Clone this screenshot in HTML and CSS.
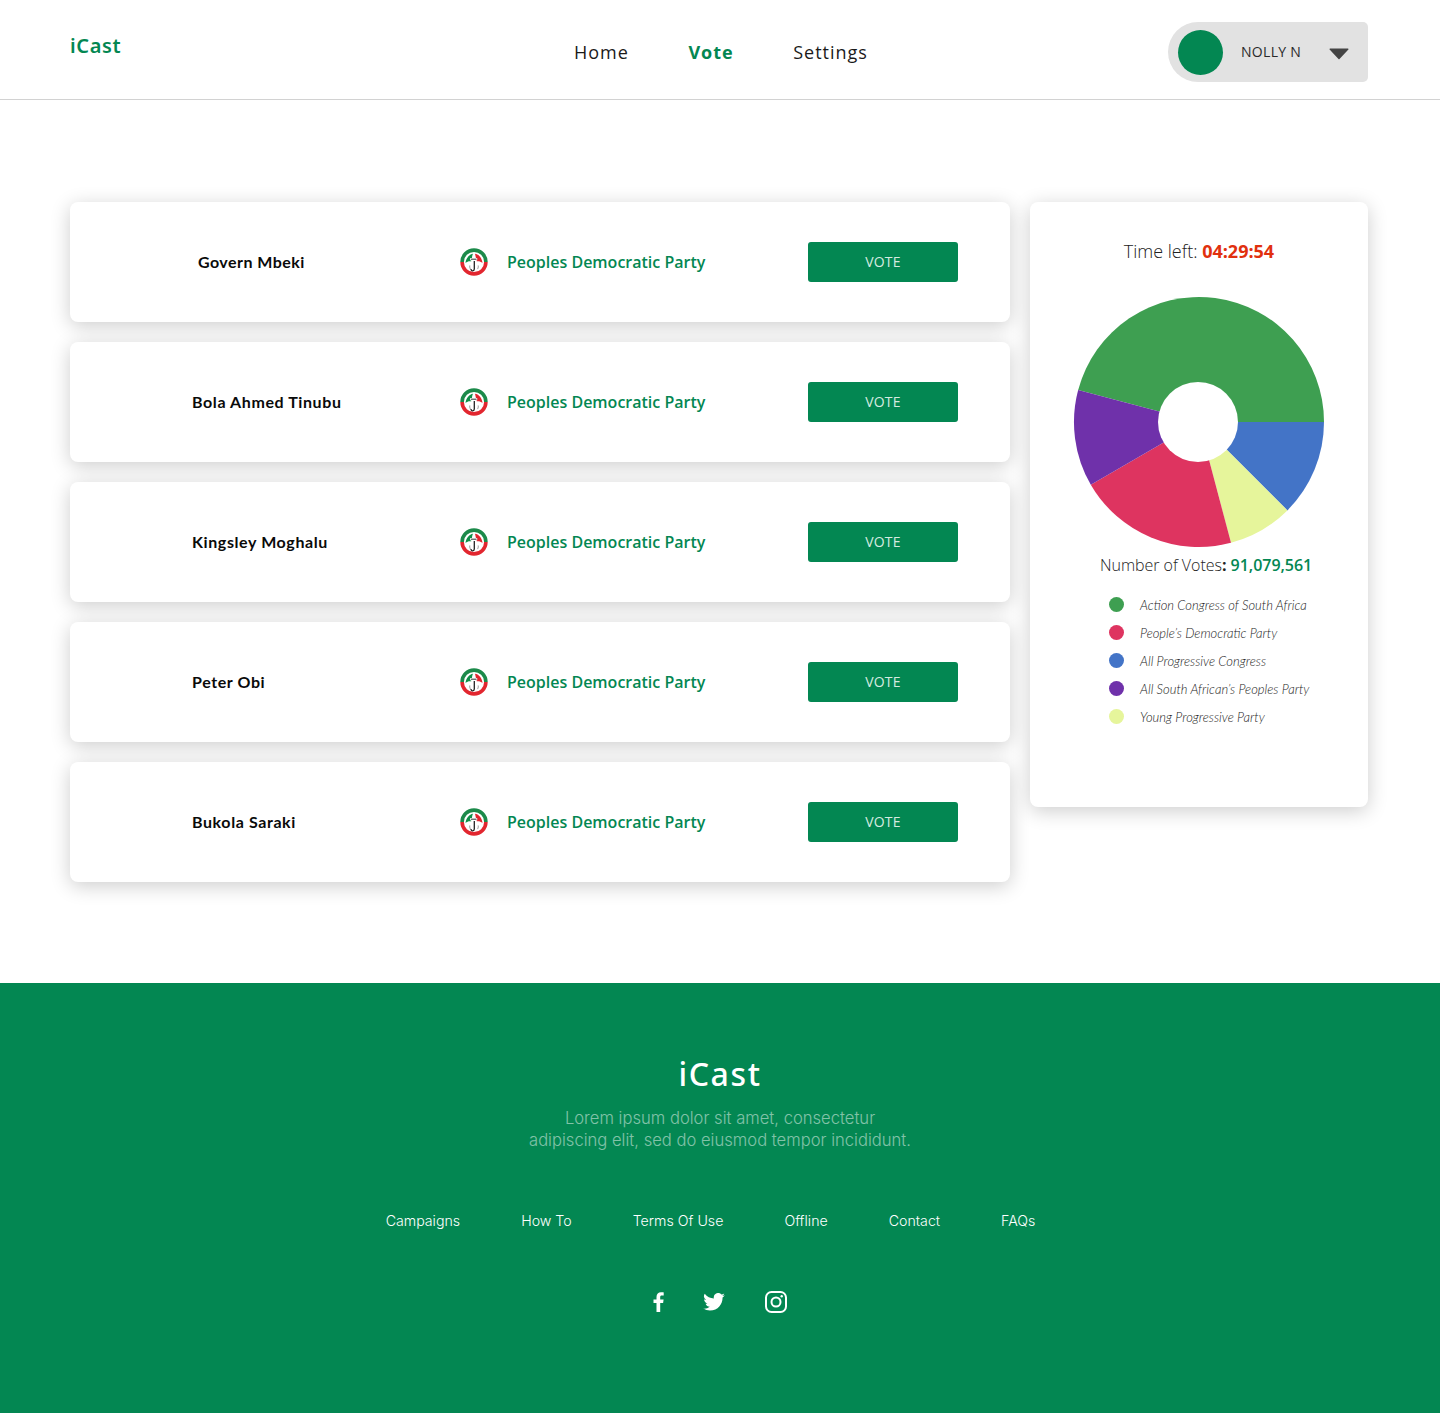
FILE: index.html
```html
<!DOCTYPE html>
<html lang="en">
<head>
<meta charset="utf-8">
<title>iCast</title>
<link rel="stylesheet" href="styles.css">
</head>
<body>
<svg class="defs" width="0" height="0" aria-hidden="true">
  <symbol id="pdp" viewBox="0 0 28 28">
    <circle cx="14" cy="14" r="14" fill="#fff"/>
    <path d="M.3 14a13.700 13.700 0 0 1 27.400 0h-3.600a10.100 10.100 0 0 0-20.200 0z" fill="#1c8a4a"/>
    <path d="M.3 14a13.700 13.700 0 0 0 27.400 0h-3.600a10.100 10.100 0 0 1-20.200 0z" fill="#e2262f"/>
    <path d="M5.500 15C6 10 9.500 6.200 13 5.800l-1.800 7.700C9.500 13 7.300 13.500 5.500 15z" fill="#0f9149"/>
    <path d="M13 5.800h2l1.700 7.500c-1.800-.6-3.800-.5-5.500.2z" fill="#fff"/>
    <path d="M15 5.800c3.500.3 7 4 7.500 9.200-1.600-1.500-3.800-2-5.800-1.700z" fill="#e2262f"/>
    <path d="M14.300 13v8c0 2.400-3.300 2.400-3.300 0" fill="none" stroke="#222" stroke-width="1.300"/>
    <path d="M10.200 10h7v2.400h-7z" fill="#fff"/>
    <path d="M11 11.200h5.500" stroke="#444" stroke-width="1.100"/>
    <path d="M9.800 17.500c-.3 1.500.2 3 .8 3.600M18.200 17.500c.3 1.500-.2 3-.8 3.600" fill="none" stroke="#777" stroke-width=".8"/>
  </symbol>
</svg>
<header class="topbar">
  <div class="logo">iCast</div>
  <nav class="nav">
    <a class="nav-link">Home</a>
    <a class="nav-link nav-active">Vote</a>
    <a class="nav-link">Settings</a>
  </nav>
  <div class="user">
    <span class="avatar"></span>
    <span class="user-name">NOLLY N</span>
    <svg class="caret" width="20" height="13" viewBox="0 0 20 13"><path d="M1 1.500h18a.6.6 0 0 1 .4 1L10.500 12a.7.7 0 0 1-1 0L.6 2.500a.6.6 0 0 1 .4-1z" fill="#444"/></svg>
  </div>
</header>

<main class="main">
  <section class="cards">
    <article class="card">
      <div class="cand cand-first">Govern Mbeki</div>
      <svg class="party-logo"><use href="#pdp"/></svg>
      <div class="party">Peoples Democratic Party</div>
      <button class="vote">VOTE</button>
    </article>
    <article class="card">
      <div class="cand">Bola Ahmed Tinubu</div>
      <svg class="party-logo"><use href="#pdp"/></svg>
      <div class="party">Peoples Democratic Party</div>
      <button class="vote">VOTE</button>
    </article>
    <article class="card">
      <div class="cand">Kingsley Moghalu</div>
      <svg class="party-logo"><use href="#pdp"/></svg>
      <div class="party">Peoples Democratic Party</div>
      <button class="vote">VOTE</button>
    </article>
    <article class="card">
      <div class="cand">Peter Obi</div>
      <svg class="party-logo"><use href="#pdp"/></svg>
      <div class="party">Peoples Democratic Party</div>
      <button class="vote">VOTE</button>
    </article>
    <article class="card">
      <div class="cand">Bukola Saraki</div>
      <svg class="party-logo"><use href="#pdp"/></svg>
      <div class="party">Peoples Democratic Party</div>
      <button class="vote">VOTE</button>
    </article>
  </section>

  <aside class="panel">
    <p class="timer">Time left: <b class="time">04:29:54</b></p>
    <svg class="pie" width="252" height="252" viewBox="-1 -1 252 252">
      <path d="M250 125A125 125 0 0 0 4.150 93.040L125 125z" fill="#3e9f51"/>
      <path d="M250 125A125 125 0 0 1 213.400 213.400L125 125z" fill="#4374c7"/>
      <path d="M213.400 213.400A125 125 0 0 1 157 245.800L125 125z" fill="#e6f59b"/>
      <path d="M157 245.800A125 125 0 0 1 16.800 187.700L125 125z" fill="#de3460"/>
      <path d="M16.800 187.700A125 125 0 0 1 4.150 93.040L125 125z" fill="#6f31aa"/>
      <circle cx="124" cy="125" r="40" fill="#fff"/>
    </svg>
    <p class="count">Number of Votes<b class="colon">:</b> <b class="num">91,079,561</b></p>
    <ul class="legend">
      <li class="legend-item"><span class="dot dot-green"></span>Action Congress of South Africa</li>
      <li class="legend-item"><span class="dot dot-red"></span>People’s Democratic Party</li>
      <li class="legend-item"><span class="dot dot-blue"></span>All Progressive Congress</li>
      <li class="legend-item"><span class="dot dot-purple"></span>All South African’s Peoples Party</li>
      <li class="legend-item"><span class="dot dot-yellow"></span>Young Progressive Party</li>
    </ul>
  </aside>
</main>

<footer class="footer">
  <div class="foot-logo">iCast</div>
  <p class="foot-text">Lorem ipsum dolor sit amet, consectetur<br>adipiscing elit, sed do eiusmod tempor incididunt.</p>
  <nav class="foot-links">
    <a>Campaigns</a><a>How To</a><a>Terms Of Use</a><a>Offline</a><a>Contact</a><a>FAQs</a>
  </nav>
  <div class="social">
    <svg class="fb" width="12" height="20" viewBox="0 0 12 20"><path d="M3.500 20v-9H.5V7.500h3V5c0-3 1.800-4.700 4.500-4.700 1.300 0 2.400.1 2.700.1v3.100H8.900c-1.500 0-1.700.7-1.700 1.700v2.300h3.400l-.5 3.500H7.200v9z" fill="#fff"/></svg>
    <svg width="22" height="18" viewBox="0 0 24 20"><path d="M24 2.400c-.9.4-1.800.7-2.800.8 1-.6 1.800-1.600 2.200-2.700-1 .6-2 1-3.100 1.200A4.900 4.900 0 0 0 11.900 6.200 14 14 0 0 1 1.700.9a4.900 4.900 0 0 0 1.500 6.600c-.8 0-1.600-.2-2.200-.6v.1c0 2.400 1.700 4.400 3.900 4.800-.7.200-1.500.2-2.200.1.600 2 2.400 3.400 4.600 3.400A9.900 9.900 0 0 1 0 17.300 14 14 0 0 0 7.500 19.500c9.100 0 14-7.500 14-14v-.6c1-.7 1.800-1.600 2.500-2.500z" fill="#fff"/></svg>
    <svg width="22" height="22" viewBox="0 0 22 22"><rect x="1" y="1" width="20" height="20" rx="5.500" fill="none" stroke="#fff" stroke-width="2"/><circle cx="11" cy="11" r="4.500" fill="none" stroke="#fff" stroke-width="2"/><circle cx="16.700" cy="5.300" r="1.200" fill="#fff"/></svg>
  </div>
</footer>
</body>
</html>
```
FILE: styles.css
```css
* { box-sizing: border-box; }
html, body { margin: 0; padding: 0; }
body { width: 1440px; height: 1413px; background: #fff; font-family: "Open Sans", sans-serif; color: #222; overflow: hidden; }
.defs { display: block; height: 0; }

.topbar { height: 100px; border-bottom: 1px solid #d2d2d2; padding: 22px 72px 0 70px; display: flex; align-items: flex-start; position: relative; }
.logo { width: 504px; font-family: "Noto Sans", sans-serif; font-weight: 600; font-size: 20px; letter-spacing: .65px; color: #038752; line-height: 27px; margin-top: 10px; }
.nav { display: flex; gap: 59.500px; margin-top: 18px; }
.nav-link { font-size: 18px; letter-spacing: 1px; line-height: 25px; color: #1a1a1a; white-space: nowrap; }
.nav-active { font-weight: 700; color: #038752; }
.user { margin-left: auto; width: 200px; height: 60px; background: #e2e2e2; border-radius: 30px 5px 5px 30px; display: flex; align-items: center; padding-left: 10px; }
.avatar { width: 45px; height: 45px; border-radius: 50%; background: #038752; }
.user-name { font-size: 14px; letter-spacing: .3px; color: #2a2a2a; margin-left: 18px; width: 88px; padding-bottom: 2px; }
.caret { display: block; margin-top: 2px; }

.main { display: flex; gap: 20px; padding: 102px 72px 0 70px; align-items: flex-start; }
.cards { width: 940px; display: flex; flex-direction: column; gap: 20px; }
.card { height: 120px; background: #fff; border-radius: 8px; box-shadow: 0 4px 20px rgba(0,0,0,.2); display: flex; align-items: center; padding-left: 122px; }
.cand { width: 268px; font-family: "Lato", sans-serif; font-weight: 700; font-size: 16px; letter-spacing: .6px; color: #0a0a0a; white-space: nowrap; padding-bottom: 2px; }
.cand-first { padding-left: 6px; letter-spacing: .45px; }
.party-logo { width: 28px; height: 28px; flex: none; }
.party { width: 301px; margin-left: 19px; font-weight: 600; font-size: 16px; color: #038752; white-space: nowrap; }
.vote { width: 150px; height: 40px; border: 0; border-radius: 3px; background: #038752; color: #d6ebe0; font: 400 14px "Open Sans", sans-serif; letter-spacing: .2px; padding: 0 0 2px; }

.panel { width: 338px; height: 605px; background: #fff; border-radius: 8px; box-shadow: 0 4px 20px rgba(0,0,0,.2); padding-top: 37px; }
.timer { margin: 0; text-align: center; font-size: 18px; font-weight: 300; line-height: 25px; color: #222; }
.time { font-weight: 700; color: #e1300e; }
.pie { display: block; margin: 32px 0 0 43px; }
.count { margin: 6px 0 0 70px; font-size: 16px; font-weight: 300; line-height: 22px; letter-spacing: -.03px; white-space: nowrap; color: #222; }
.colon { font-weight: 700; }
.num { font-weight: 600; color: #038752; }
.legend { list-style: none; margin: 20px 0 0 79px; padding: 0; display: flex; flex-direction: column; gap: 11px; }
.legend-item { display: flex; align-items: center; height: 17px; font-family: "Lato", sans-serif; font-weight: 300; font-style: italic; font-size: 13px; color: #222; white-space: nowrap; }
.dot { width: 15px; height: 15px; border-radius: 50%; margin-right: 16px; flex: none; }
.dot-green { background: #3e9f51; }
.dot-red { background: #de3460; }
.dot-blue { background: #4374c7; }
.dot-purple { background: #6f31aa; }
.dot-yellow { background: #e6f59b; }

.footer { position: absolute; left: 0; top: 983px; width: 1440px; height: 430px; background: #038752; display: flex; flex-direction: column; align-items: center; padding-top: 69px; }
.foot-logo { font-family: "Noto Sans", sans-serif; font-weight: 500; font-size: 32px; letter-spacing: 1.600px; line-height: 44px; color: #fff; }
.foot-text { margin: 11px 0 0; text-align: center; font-family: "Inter", sans-serif; font-weight: 300; font-size: 16.600px; line-height: 22px; color: rgba(255,255,255,.5); }
.foot-links { display: flex; gap: 61px; margin: 60px 19px 0 0; font-family: "Inter", sans-serif; font-weight: 300; font-size: 14.200px; line-height: 20px; color: #fff; }
.social { display: flex; align-items: center; gap: 40px; margin: 60px 0 0 -1px; }
.fb { margin-right: -2px; }
```
